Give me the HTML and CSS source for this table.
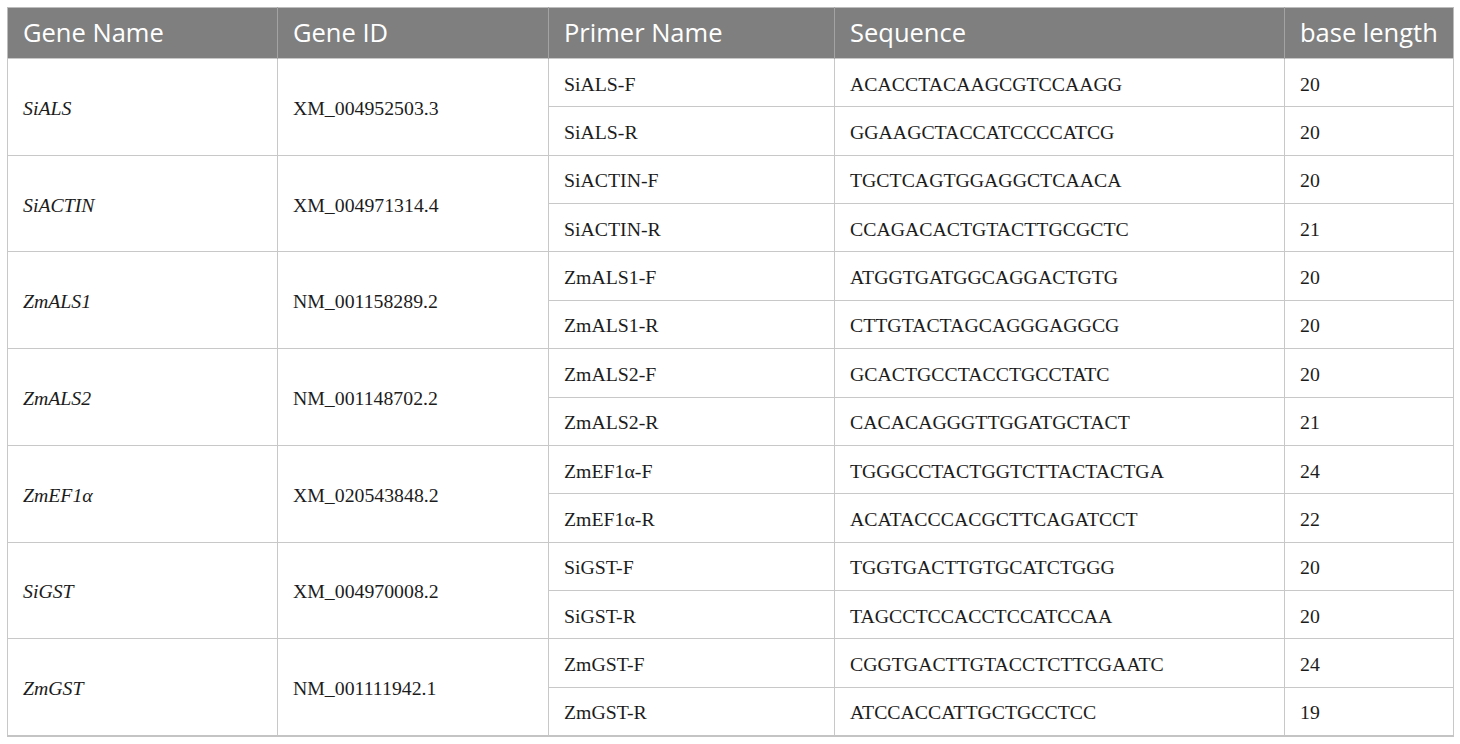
FILE: index.html
```html
<!DOCTYPE html>
<html lang="en">
<head>
<meta charset="utf-8">
<title>Primer table</title>
<link rel="stylesheet" href="styles.css">
</head>
<body>
<table class="primers">
  <colgroup>
    <col class="c-name">
    <col class="c-id">
    <col class="c-primer">
    <col class="c-seq">
    <col class="c-len">
  </colgroup>
  <thead>
    <tr>
      <th>Gene Name</th>
      <th>Gene ID</th>
      <th>Primer Name</th>
      <th>Sequence</th>
      <th>base length</th>
    </tr>
  </thead>
  <tbody>
    <tr><td rowspan="2" class="gene">SiALS</td><td rowspan="2">XM_004952503.3</td><td>SiALS-F</td><td>ACACCTACAAGCGTCCAAGG</td><td>20</td></tr>
    <tr><td>SiALS-R</td><td>GGAAGCTACCATCCCCATCG</td><td>20</td></tr>
    <tr><td rowspan="2" class="gene">SiACTIN</td><td rowspan="2">XM_004971314.4</td><td>SiACTIN-F</td><td>TGCTCAGTGGAGGCTCAACA</td><td>20</td></tr>
    <tr><td>SiACTIN-R</td><td>CCAGACACTGTACTTGCGCTC</td><td>21</td></tr>
    <tr><td rowspan="2" class="gene">ZmALS1</td><td rowspan="2">NM_001158289.2</td><td>ZmALS1-F</td><td>ATGGTGATGGCAGGACTGTG</td><td>20</td></tr>
    <tr><td>ZmALS1-R</td><td>CTTGTACTAGCAGGGAGGCG</td><td>20</td></tr>
    <tr><td rowspan="2" class="gene">ZmALS2</td><td rowspan="2">NM_001148702.2</td><td>ZmALS2-F</td><td>GCACTGCCTACCTGCCTATC</td><td>20</td></tr>
    <tr><td>ZmALS2-R</td><td>CACACAGGGTTGGATGCTACT</td><td>21</td></tr>
    <tr><td rowspan="2" class="gene">ZmEF1α</td><td rowspan="2">XM_020543848.2</td><td>ZmEF1α-F</td><td>TGGGCCTACTGGTCTTACTACTGA</td><td>24</td></tr>
    <tr><td>ZmEF1α-R</td><td>ACATACCCACGCTTCAGATCCT</td><td>22</td></tr>
    <tr><td rowspan="2" class="gene">SiGST</td><td rowspan="2">XM_004970008.2</td><td>SiGST-F</td><td>TGGTGACTTGTGCATCTGGG</td><td>20</td></tr>
    <tr><td>SiGST-R</td><td>TAGCCTCCACCTCCATCCAA</td><td>20</td></tr>
    <tr><td rowspan="2" class="gene">ZmGST</td><td rowspan="2">NM_001111942.1</td><td>ZmGST-F</td><td>CGGTGACTTGTACCTCTTCGAATC</td><td>24</td></tr>
    <tr><td>ZmGST-R</td><td>ATCCACCATTGCTGCCTCC</td><td>19</td></tr>
  </tbody>
</table>
</body>
</html>
```
FILE: styles.css
```css
html, body {
  margin: 0;
  padding: 0;
  background: #ffffff;
}

body {
  padding: 7px;
}

.primers {
  border-collapse: collapse;
  table-layout: fixed;
  width: 1446px;
  border: 1px solid #bdbdbd;
  border-bottom: 2px solid #c4c4c4;
}

.c-name { width: 270px; }
.c-id { width: 271px; }
.c-primer { width: 286px; }
.c-seq { width: 450px; }
.c-len { width: 169px; }

.primers th {
  background: #7f7f7f;
  color: #ffffff;
  font-family: "Open Sans", "Liberation Sans", sans-serif;
  font-weight: 400;
  font-size: 25.5px;
  text-align: left;
  height: 51px;
  padding: 0 0 2px 15px;
  border-left: 1px solid #a3a3a3;
  box-sizing: border-box;
  vertical-align: middle;
  white-space: nowrap;
}

.primers th:first-child {
  border-left: none;
}

.primers td {
  font-family: "Liberation Serif", "Times New Roman", serif;
  font-size: 19.8px;
  color: #1c1c1c;
  height: 48.36px;
  padding: 3px 0 0 15px;
  border: 1px solid #c8c8c8;
  box-sizing: border-box;
  vertical-align: middle;
  white-space: nowrap;
}

.primers td.gene {
  font-style: italic;
}
```
